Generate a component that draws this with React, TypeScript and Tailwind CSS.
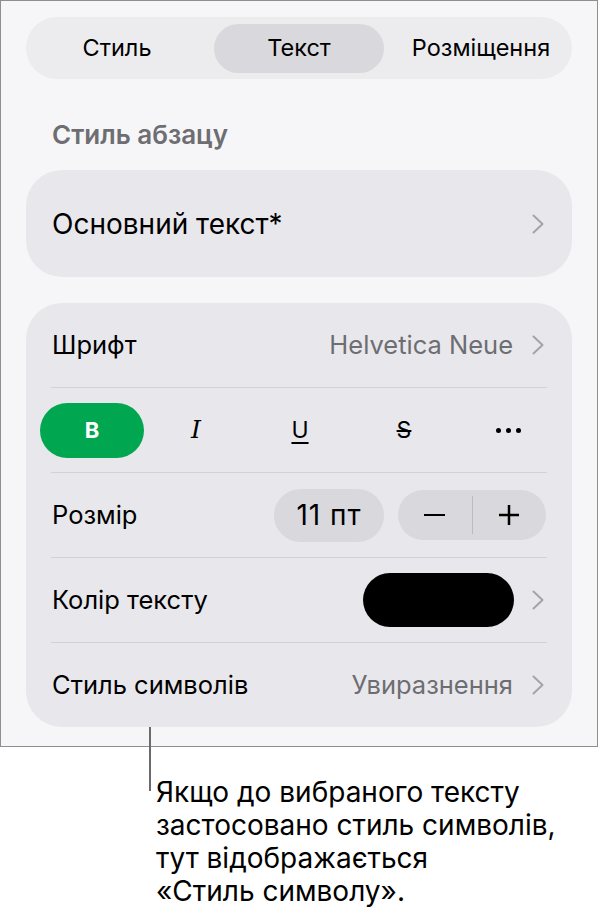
import React from "react";

const Chevron = () => (
  <svg width="14" height="20" viewBox="0 0 14 20" className="shrink-0">
    <path d="M2.5 1.5 L11.5 10 L2.5 18.5" fill="none" stroke="#a3a3a8" strokeWidth="2" strokeLinecap="round" strokeLinejoin="round" />
  </svg>
);

const Divider = () => <div className="mx-[25px] h-px bg-[#d2d2d6]" />;

export default function App() {
  const font = { fontFamily: "Inter, 'Noto Sans', sans-serif" };
  return (
    <div className="relative w-[599px] h-[915px] bg-white text-black" style={font}>
      <div className="w-[598px] h-[747px] border border-[#8e8e8e] bg-[#f6f6f8] flex flex-col">
        {/* segmented control */}
        <div className="mt-[16px] mx-[25px] h-[62px] rounded-full bg-[#ececef] grid grid-cols-3 items-center text-[23.5px]">
          <div className="h-[49px] flex items-center justify-center">Стиль</div>
          <div className="h-[49px] mx-[6px] rounded-full bg-[#d9d9dd] flex items-center justify-center">Текст</div>
          <div className="h-[49px] flex items-center justify-center">Розміщення</div>
        </div>

        <div className="mt-[40px] mb-[19px] h-[32px] leading-[32px] pl-[51px] text-[26px] font-semibold text-[#6d6d72]">
          Стиль абзацу
        </div>

        <div className="mx-[25px] h-[107px] rounded-[36px] bg-[#e8e8ec] flex items-center justify-between pl-[26px] pr-[27px]">
          <span className="text-[28px]">Основний текст*</span>
          <Chevron />
        </div>

        <div className="mt-[26px] mx-[25px] h-[424px] rounded-[36px] bg-[#e8e8ec] flex flex-col text-[25.5px]">
          <div className="h-[84px] flex items-center justify-between pl-[26px] pr-[27px]">
            <span>Шрифт</span>
            <div className="flex items-center gap-[18px]">
              <span className="text-[#6d6d72]">Helvetica Neue</span>
              <Chevron />
            </div>
          </div>
          <Divider />
          <div className="h-[84px] flex items-center pl-[14px]">
            <div className="w-[104px] h-[55px] rounded-full bg-[#00a650] flex items-center justify-center text-white font-bold text-[22px]">B</div>
            <div className="w-[104px] h-[55px] flex items-center justify-center">
              <span className="text-[25px] italic" style={{ fontFamily: "'DejaVu Serif', serif" }}>I</span>
            </div>
            <div className="w-[104px] h-[55px] flex items-center justify-center">
              <span className="text-[23px] underline underline-offset-[4px] decoration-[2px]">U</span>
            </div>
            <div className="w-[104px] h-[55px] flex items-center justify-center">
              <span className="text-[23px] line-through decoration-[2px]">S</span>
            </div>
            <div className="w-[104px] h-[55px] flex items-center justify-center gap-[5px]">
              <span className="w-[5px] h-[5px] rounded-full bg-black" />
              <span className="w-[5px] h-[5px] rounded-full bg-black" />
              <span className="w-[5px] h-[5px] rounded-full bg-black" />
            </div>
          </div>
          <Divider />
          <div className="h-[84px] flex items-center justify-between pl-[26px] pr-[27px]">
            <span>Розмір</span>
            <div className="flex items-center gap-[14px] mr-[-1px]">
              <div className="w-[110px] h-[53px] rounded-full bg-[#d9d9dd] flex items-center justify-center text-[28px] tracking-[1px]">11 пт</div>
              <div className="w-[148px] h-[50px] rounded-full bg-[#d9d9dd] flex items-center">
                <div className="flex-1 flex items-center justify-center">
                  <span className="w-[21px] h-[2.5px] bg-black" />
                </div>
                <div className="w-px h-[38px] bg-[#bcbcc0]" />
                <div className="flex-1 flex items-center justify-center">
                  <svg width="22" height="22" viewBox="0 0 22 22">
                    <path d="M11 1 V21 M1 11 H21" stroke="black" strokeWidth="2.5" />
                  </svg>
                </div>
              </div>
            </div>
          </div>
          <Divider />
          <div className="h-[84px] flex items-center justify-between pl-[26px] pr-[27px]">
            <span>Колір тексту</span>
            <div className="flex items-center gap-[17px]">
              <div className="w-[151px] h-[54px] rounded-full bg-black" />
              <Chevron />
            </div>
          </div>
          <Divider />
          <div className="h-[84px] flex items-center justify-between pl-[26px] pr-[27px]">
            <span>Стиль символів</span>
            <div className="flex items-center gap-[18px]">
              <span className="text-[#6d6d72]">Увиразнення</span>
              <Chevron />
            </div>
          </div>
        </div>
      </div>

      <div className="absolute left-[149px] top-[727px] w-[2px] h-[64px] bg-[#6b6b6b]" />

      <div className="mt-[29px] pl-[156px] text-[28px] leading-[33px] text-black">
        <div>Якщо до вибраного тексту</div>
        <div>застосовано стиль символів,</div>
        <div>тут відображається</div>
        <div>«Стиль символу».</div>
      </div>
    </div>
  );
}
